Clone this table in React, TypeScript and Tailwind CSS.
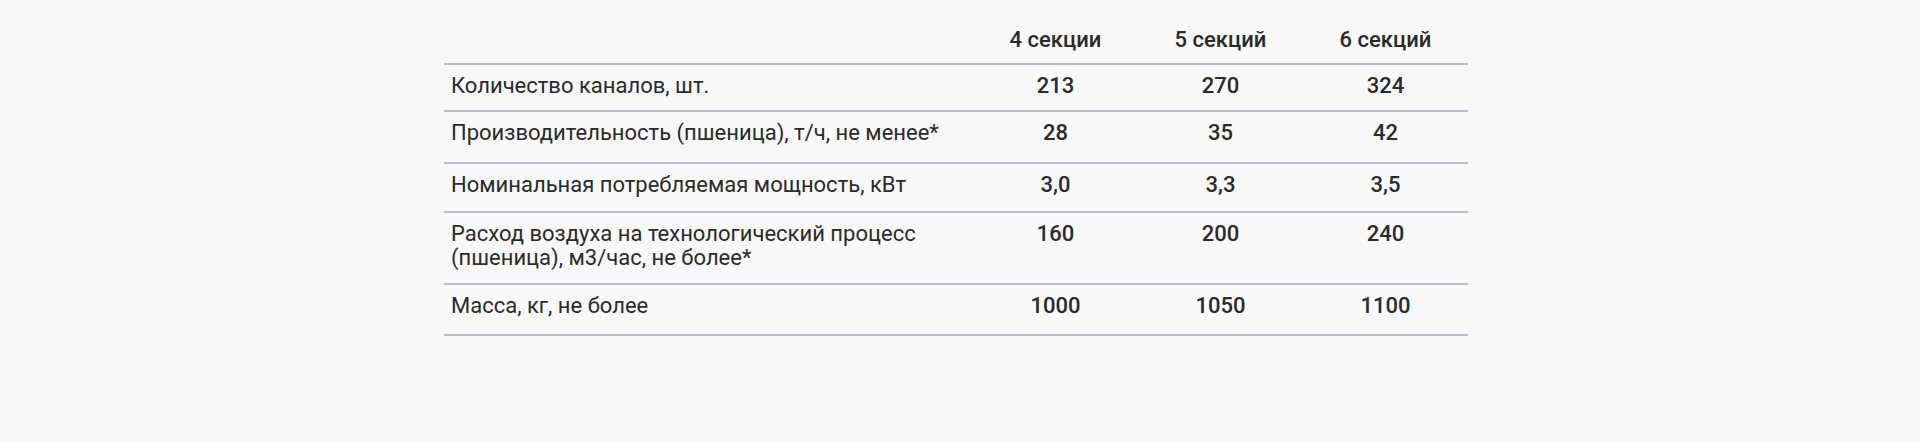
const headers = ['4 секции', '5 секций', '6 секций']

const rows = [
  { label: ['Количество каналов, шт.'], values: ['213', '270', '324'], h: 'h-[47px]' },
  { label: ['Производительность (пшеница), т/ч, не менее*'], values: ['28', '35', '42'], h: 'h-[52px]' },
  { label: ['Номинальная потребляемая мощность, кВт'], values: ['3,0', '3,3', '3,5'], h: 'h-[49px]' },
  {
    label: ['Расход воздуха на технологический процесс', '(пшеница), м3/час, не более*'],
    values: ['160', '200', '240'],
    h: 'h-[72px]',
  },
  { label: ['Масса, кг, не более'], values: ['1000', '1050', '1100'], h: 'h-[51px]' },
]

export default function App() {
  return (
    <div className="min-h-[442px] bg-[#f8f8f8] pr-2 font-['Roboto',sans-serif] text-[22px] leading-[24px] text-[#2a2a2a]">
      <div className="mx-auto w-[1024px]">
        {/* header */}
        <div className="grid h-[65px] grid-cols-[1fr_165px_165px_165px] items-end border-b-2 border-[#b3bdcb] pb-[11px]">
          <div />
          {headers.map(h => (
            <div key={h} className="text-center font-medium">
              {h}
            </div>
          ))}
        </div>

        {rows.map((row, i) => (
          <div
            key={i}
            className={`grid grid-cols-[1fr_165px_165px_165px] items-start border-b-2 border-[#b3bdcb] pt-[9px] ${row.h}`}
          >
            <div className="pl-[7px]">
              {row.label.map(line => (
                <div key={line}>{line}</div>
              ))}
            </div>
            {row.values.map((v, j) => (
              <div key={j} className="text-center font-medium">
                {v}
              </div>
            ))}
          </div>
        ))}
      </div>
    </div>
  )
}
